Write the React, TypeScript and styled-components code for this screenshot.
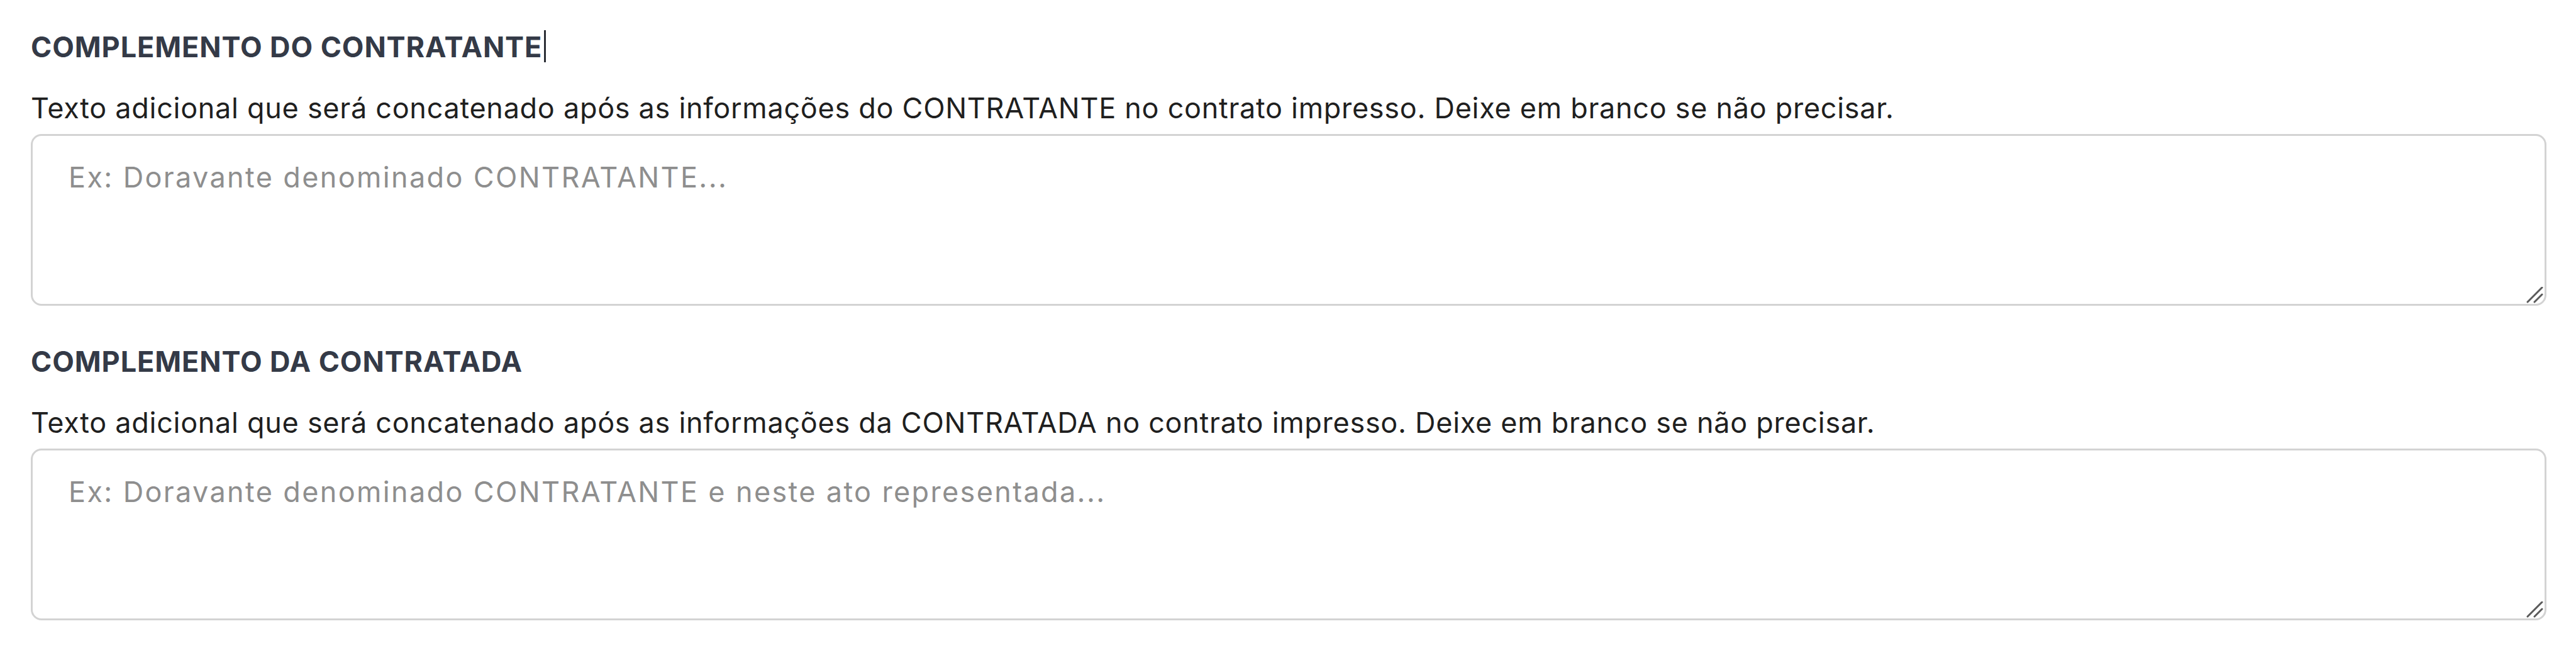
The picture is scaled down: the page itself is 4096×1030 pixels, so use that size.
import React from 'react'
import styled, {createGlobalStyle} from 'styled-components'

const GlobalStyle = createGlobalStyle`
  html, body {
    margin: 0;
    padding: 0;
    background: #ffffff;
  }
  body {
    font-family: Inter, "Noto Sans", "Liberation Sans", sans-serif;
  }
`

const Page = styled.div`
  display: flex;
  flex-direction: column;
  gap: 56px;
  padding: 42px 47px 40px 49px;
`

const Field = styled.section`
  display: flex;
  flex-direction: column;
`

const Heading = styled.h3`
  margin: 0 0 31px;
  font-size: 45px;
  line-height: 66px;
  font-weight: 700;
  letter-spacing: 0.02em;
  text-transform: uppercase;
  color: #343a47;
  white-space: nowrap;
`

const Caret = styled.span`
  display: inline-block;
  width: 3px;
  height: 51px;
  margin-left: 3px;
  vertical-align: -8px;
  background: #2c2f36;
`

const Hint = styled.p`
  margin: 0 0 8px;
  font-size: 45px;
  line-height: 66px;
  font-weight: 400;
  letter-spacing: 0.7px;
  color: #1f1f1f;
  white-space: nowrap;
`

const Box = styled.div`
  position: relative;
`

const TextArea = styled.textarea`
  display: block;
  box-sizing: border-box;
  width: 100%;
  height: 273px;
  padding: 33px 57px;
  border: 3px solid #d3d3d3;
  border-radius: 17px;
  background: #ffffff;
  font-family: inherit;
  font-size: 45px;
  line-height: 66px;
  letter-spacing: 2.35px;
  color: #1f1f1f;
  resize: none;
  outline: none;

  &::placeholder {
    color: #8e8e8e;
  }
`

const Grip = styled.svg`
  position: absolute;
  right: 5px;
  bottom: 3px;
  width: 27px;
  height: 27px;
  pointer-events: none;
`

const ResizeGrip = () => (
  <Grip viewBox="0 0 27 27">
    <line x1="2" y1="24" x2="25" y2="1" stroke="#5a5a5a" strokeWidth="3" strokeLinecap="round" />
    <line x1="13" y1="24" x2="25" y2="12" stroke="#5a5a5a" strokeWidth="3" strokeLinecap="round" />
  </Grip>
)

interface ComplementFieldProps {
  title: string
  hint: string
  placeholder: string
  focused?: boolean
}

const ComplementField: React.FC<ComplementFieldProps> = ({title, hint, placeholder, focused}) => (
  <Field>
    <Heading>
      {title}
      {focused && <Caret />}
    </Heading>
    <Hint>{hint}</Hint>
    <Box>
      <TextArea placeholder={placeholder} />
      <ResizeGrip />
    </Box>
  </Field>
)

const App = () => (
  <>
    <GlobalStyle />
    <Page>
      <ComplementField
        title="Complemento do Contratante"
        hint="Texto adicional que será concatenado após as informações do CONTRATANTE no contrato impresso. Deixe em branco se não precisar."
        placeholder="Ex: Doravante denominado CONTRATANTE..."
        focused
      />
      <ComplementField
        title="Complemento da Contratada"
        hint="Texto adicional que será concatenado após as informações da CONTRATADA no contrato impresso. Deixe em branco se não precisar."
        placeholder="Ex: Doravante denominado CONTRATANTE e neste ato representada..."
      />
    </Page>
  </>
)

export default App
